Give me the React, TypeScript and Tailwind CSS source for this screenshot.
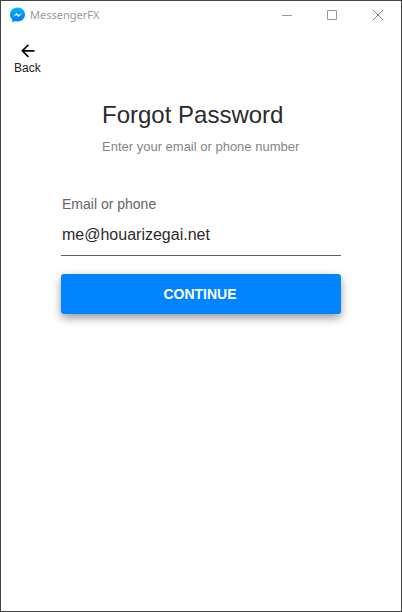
import React from 'react';

function MessengerLogo() {
  return (
    <svg viewBox="0 0 16 16" className="size-4 shrink-0" aria-hidden="true">
      <defs>
        <linearGradient id="bubble" x1="0" y1="0" x2="0" y2="1">
          <stop offset="0" stopColor="#00b8ff" />
          <stop offset="1" stopColor="#0070ff" />
        </linearGradient>
      </defs>
      <path
        fill="url(#bubble)"
        d="M8.500 0.500C4.300 0.500 1 3.600 1 7.500c0 2.100 0.900 3.900 2.400 5.200v2.800l2.500-1.400c0.800 0.200 1.700 0.400 2.600 0.400 4.200 0 7.500-3.100 7.500-7S12.700 0.500 8.500 0.500z"
      />
      <path fill="#fff" d="M3.800 10L7.600 6l2.100 2 3.700-2-3.900 4-2.100-2z" />
    </svg>
  );
}

function TitleBar() {
  const control = 'flex h-7 flex-1 items-center justify-center';
  return (
    <header className="flex h-7 items-center justify-between">
      <div className="flex items-center gap-1 pl-2">
        <MessengerLogo />
        <span className="pl-px font-['Noto_Sans','Open_Sans',sans-serif] text-[11px] leading-4 text-[#999999]">
          MessengerFX
        </span>
      </div>
      <div className="flex w-[137px]">
        <button type="button" aria-label="Minimize" className={control}>
          <svg width="10" height="11" viewBox="0 0 10 11" stroke="#999999" fill="none">
            <path d="M0 5.500H10" />
          </svg>
        </button>
        <button type="button" aria-label="Maximize" className={control}>
          <svg width="11" height="11" viewBox="0 0 11 11" stroke="#999999" fill="none">
            <path d="M0.500 0.500H9.500V9.500H0.500z" />
          </svg>
        </button>
        <button type="button" aria-label="Close" className={control}>
          <svg width="11" height="11" viewBox="0 0 11 11" stroke="#808080" fill="none">
            <path d="M0 0L10 10M10 0L0 10" />
          </svg>
        </button>
      </div>
    </header>
  );
}

export default function App() {
  return (
    <div className="min-h-screen border border-[#444346] bg-white font-['Liberation_Sans',Arial,sans-serif] text-[#2b2b2b]">
      <TitleBar />
      <main>
        <button
          type="button"
          className="ml-3 mt-[11px] flex flex-col items-center px-px text-[12px] leading-4 text-[#222222]"
        >
          <svg width="20" height="20" viewBox="-1 -1 24 24" fill="#000" aria-hidden="true">
            <path d="M20 11H7.830l5.590-5.590L12 4l-8 8 8 8 1.410-1.410L7.830 13H20v-2z" />
          </svg>
          Back
        </button>

        <div className="mx-auto mt-[23px] w-[198px] whitespace-nowrap">
          <h1 className="text-[24px] leading-8">Forgot Password</h1>
          <p className="mt-2 text-[13px] leading-4 text-[#858585]">Enter your email or phone number</p>
        </div>

        <form
          className="mx-auto mt-[41px] flex w-full max-w-[280px] flex-col"
          onSubmit={(event) => event.preventDefault()}
        >
          <label htmlFor="account" className="pl-px text-[14px] leading-4 text-[#666666]">
            Email or phone
          </label>
          <input
            id="account"
            type="text"
            defaultValue="me@houarizegai.net"
            className="mt-1 h-10 w-full border-b border-[#5f5f5f] bg-transparent pb-[2px] pl-px text-[16px] outline-none"
          />
          <button
            type="submit"
            className="mt-[18px] h-10 rounded-[3px] bg-[#0084ff] pr-[2px] text-[14px] font-bold text-white shadow-[0_4px_10px_rgba(0,0,0,0.4)]"
          >
            CONTINUE
          </button>
        </form>
      </main>
    </div>
  );
}
